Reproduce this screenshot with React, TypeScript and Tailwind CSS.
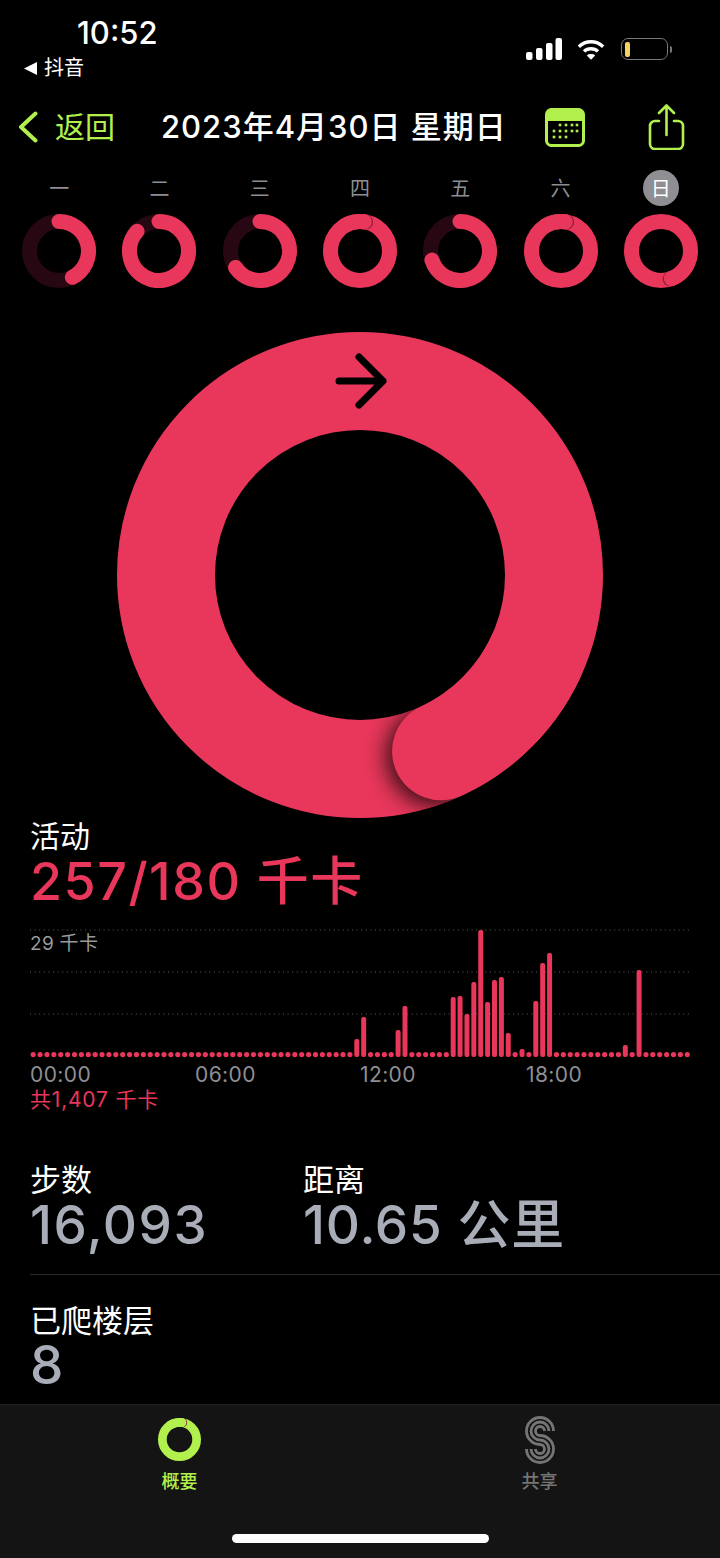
import { useId } from 'react';

const RED = '#e8375a';
const LIME = '#b2f04e';

const polar = (cx: number, cy: number, r: number, deg: number) => {
  const a = ((deg - 90) * Math.PI) / 180;
  return [cx + r * Math.cos(a), cy + r * Math.sin(a)];
};

const arcPath = (cx: number, cy: number, r: number, from: number, to: number) => {
  const [x1, y1] = polar(cx, cy, r, from);
  const [x2, y2] = polar(cx, cy, r, to);
  const large = to - from > 180 ? 1 : 0;
  return `M${x1} ${y1}A${r} ${r} 0 ${large} 1 ${x2} ${y2}`;
};

function MiniRing({ end, color = RED, track = '#270812', size = 74 }: { end: number; color?: string; track?: string; size?: number }) {
  const c = size / 2;
  const sw = size * 0.203;
  const r = c - sw / 2;
  const over = end > 360;
  const tail = end % 360;
  const [capX, capY] = polar(c, c, r, tail);
  const [edgeX, edgeY] = polar(c, c, r, tail + 3);
  return (
    <svg width={size} height={size} viewBox={`0 0 ${size} ${size}`}>
      <circle cx={c} cy={c} r={r} fill="none" stroke={over ? color : track} strokeWidth={sw} />
      {over ? (
        <>
          <circle cx={edgeX} cy={edgeY} r={sw / 2} fill="#8f2039" />
          <path d={arcPath(c, c, r, tail - 40, tail)} fill="none" stroke={color} strokeWidth={sw} strokeLinecap="round" />
          <circle cx={capX} cy={capY} r={sw / 2} fill={color} />
        </>
      ) : (
        <path d={arcPath(c, c, r, 0, end)} fill="none" stroke={color} strokeWidth={sw} strokeLinecap="round" />
      )}
    </svg>
  );
}

function BigRing() {
  const id = useId();
  return (
    <svg width="486" height="486" viewBox="0 0 486 486">
      <defs>
        <filter id={`${id}b`} x="-50%" y="-50%" width="200%" height="200%">
          <feGaussianBlur stdDeviation="11" />
        </filter>
        <clipPath id={`${id}c`}>
          <path clipRule="evenodd" d="M0 243a243 243 0 1 0 486 0a243 243 0 1 0-486 0ZM98 243a145 145 0 1 1 290 0a145 145 0 1 1-290 0Z" />
        </clipPath>
      </defs>
      <circle cx="243" cy="243" r="194" fill="none" stroke={RED} strokeWidth="98" />
      <g clipPath={`url(#${id}c)`}>
        <circle cx="320" cy="424" r="50" fill="#000" opacity="0.8" filter={`url(#${id}b)`} />
      </g>
      <path d={arcPath(243, 243, 194, 115, 155.3)} fill="none" stroke={RED} strokeWidth="98" strokeLinecap="round" />
      <path d="M222 49H265M242 25L266 49L242 73" fill="none" stroke="#000" strokeWidth="7" strokeLinecap="round" strokeLinejoin="round" />
    </svg>
  );
}

const tall: Record<number, number> = {
  47: 18, 48: 40, 53: 27, 54: 51, 61: 60, 62: 61, 63: 43, 64: 75, 65: 127, 66: 55, 67: 77, 68: 80, 69: 24,
  71: 8, 73: 56, 74: 94, 75: 104, 86: 12, 88: 87,
};

function Chart() {
  const base = 131;
  return (
    <svg width="720" height="134" viewBox="0 0 720 134" className="block">
      {[4, 46, 88].map((y) => (
        <line key={y} x1="30" x2="690" y1={y} y2={y} stroke="#5f5f5f" strokeWidth="1" strokeDasharray="1 3.6" />
      ))}
      {Array.from({ length: 96 }, (_, i) => {
        const x = 33.2 + i * 6.885;
        const h = tall[i];
        return h ? (
          <rect key={i} x={x - 2.5} y={base - h} width="5" height={h} rx="2" fill={RED} />
        ) : (
          <circle key={i} cx={x} cy={base - 2.4} r="2.6" fill={RED} />
        );
      })}
    </svg>
  );
}

function ShareTabIcon() {
  const tracks = [4.5, 9, 13.5];
  return (
    <svg width="32" height="48" viewBox="-16 -24 32 48" fill="none" stroke="#757575" strokeWidth="2.8">
      {tracks.map((r) => {
        const b = 18 - r;
        return (
          <path
            key={r}
            d={`M${r} -9A${r} ${r} 0 1 0 0 ${r - 9}A${b} ${b} 0 1 1 ${-b} 9`}
          />
        );
      })}
    </svg>
  );
}

const days = [
  { label: '一', end: 153 },
  { label: '二', end: 312 },
  { label: '三', end: 236 },
  { label: '四', end: 368 },
  { label: '五', end: 252 },
  { label: '六', end: 368 },
  { label: '日', end: 519 },
];

export default function App() {
  return (
    <div className="flex h-[1558px] w-[720px] flex-col overflow-hidden bg-black font-['Inter','Noto_Sans_CJK_SC',sans-serif] text-white">
      {/* status bar */}
      <div className="flex h-[104px] shrink-0 justify-between">
        <div>
          <div className="pl-[77px] pt-[15px] text-[31px] font-medium leading-[36px]">10:52</div>
          <div className="mt-[5px] flex h-[24px] items-center gap-[7px] pl-[24px] text-[20px] leading-[24px]">
            <svg width="13" height="13" viewBox="0 0 13 13"><path d="M0 6.5L13 0V13Z" fill="#fff" /></svg>
            抖音
          </div>
        </div>
        <div className="mr-[48px] mt-[37px] flex h-[24px] items-center gap-[15px]">
          <svg width="36" height="22" viewBox="0 0 36 22" fill="#fff">
            <rect x="0" y="14" width="6.5" height="8" rx="2" />
            <rect x="10" y="10" width="6.5" height="12" rx="2" />
            <rect x="20" y="5" width="6.5" height="17" rx="2" />
            <rect x="29.5" y="0" width="6.5" height="22" rx="2" />
          </svg>
          <svg width="28" height="23" viewBox="0 0 30 23" fill="none" stroke="#fff" strokeWidth="3.6" strokeLinecap="butt">
            <path d="M2 8.5C9.5 1.5 20.5 1.5 28 8.5" />
            <path d="M7.5 13.5C11.5 9.8 18.5 9.8 22.5 13.5" />
            <path d="M15 22.5L10.5 17.8C13 15.8 17 15.8 19.5 17.8Z" fill="#fff" stroke="none" />
          </svg>
          <div className="ml-[1px] flex items-center gap-[2px]">
            <div className="flex h-[22px] w-[47px] items-center rounded-[7px] border border-[#77777c] px-[3px]">
              <div className="h-[15px] w-[5px] rounded-[2px] bg-[#f4d35e]" />
            </div>
            <div className="h-[7px] w-[2px] rounded-r-full bg-[#77777c]" />
          </div>
        </div>
      </div>

      {/* nav */}
      <div className="flex h-[46px] shrink-0 items-center pl-[18px]">
        <svg width="20" height="32" viewBox="0 0 20 32" fill="none" stroke={LIME} strokeWidth="4" strokeLinecap="round" strokeLinejoin="round">
          <path d="M17.5 2.5L3 16L17.5 29.5" />
        </svg>
        <span className="ml-[17px] w-[106px] text-[30px] leading-[36px] text-[#b2f04e]">返回</span>
        <span className="w-[384px] whitespace-nowrap text-[31px] font-medium leading-[38px] tracking-[1px]">2023年4月30日 星期日</span>
        <svg width="40" height="39" viewBox="0 0 40 39">
          <rect x="1.5" y="1.5" width="37" height="36" rx="5" fill="none" stroke={LIME} strokeWidth="3" />
          <path d="M1.5 13V6.5a5 5 0 0 1 5-5h27a5 5 0 0 1 5 5V13Z" fill={LIME} />
          <g fill={LIME}>
            {[[15, 17], [21, 17], [27, 17], [32, 17], [9, 23], [15, 23], [21, 23], [27, 23], [32, 23], [9, 29], [15, 29], [21, 29]].map(([x, y]) => (
              <rect key={`${x}-${y}`} x={x - 1.3} y={y - 1.3} width="2.6" height="2.6" />
            ))}
          </g>
        </svg>
        <svg width="37" height="46" viewBox="0 0 37 46" fill="none" stroke={LIME} strokeWidth="2.6" strokeLinecap="round" strokeLinejoin="round" className="ml-[63px]">
          <path d="M11 17H7a5 5 0 0 0-5 5v18a5 5 0 0 0 5 5h23a5 5 0 0 0 5-5V22a5 5 0 0 0-5-5h-4" />
          <path d="M18.5 31V2M11 9l7.5-7.5L26 9" />
        </svg>
      </div>

      {/* week */}
      <div className="mt-[20px] grid shrink-0 grid-cols-7 px-[9px]">
        {days.map((d, i) => (
          <div key={d.label} className="flex h-[36px] items-center justify-center">
            <span className={`flex h-[36px] w-[36px] items-center justify-center rounded-full pt-px text-[20px] ${i === 6 ? 'bg-[#8e8e93] text-white' : 'text-[#8e8e93]'}`}>
              {d.label}
            </span>
          </div>
        ))}
      </div>
      <div className="mt-[8px] grid shrink-0 grid-cols-7 px-[9px]">
        {days.map((d) => (
          <div key={d.label} className="flex justify-center">
            <MiniRing end={d.end} />
          </div>
        ))}
      </div>

      {/* main ring */}
      <div className="mt-[44px] flex shrink-0 justify-center">
        <BigRing />
      </div>

      {/* activity */}
      <div className="shrink-0 pl-[30px] text-[30px] leading-[36px]">活动</div>
      <div className="shrink-0 whitespace-nowrap pl-[30px] text-[52px] font-medium leading-[56px] tracking-[1.5px] text-[#e8375a]">257/180 千卡</div>
      <div className="relative mt-[16px] shrink-0">
        <Chart />
        <span className="absolute left-[30px] top-[6px] text-[19px] leading-[24px] tracking-[0.3px] text-[#9a9a9a]">29 千卡</span>
      </div>
      <div className="mt-[3px] grid h-[24px] shrink-0 grid-cols-[165px_165px_166px_1fr] pl-[30px] text-[21px] leading-[24px] tracking-[0.4px] text-[#8e8e93]">
        <span>00:00</span>
        <span>06:00</span>
        <span>12:00</span>
        <span>18:00</span>
      </div>
      <div className="h-[26px] shrink-0 pl-[30px] text-[21px] leading-[26px] tracking-[0.8px] text-[#e8375a]">共1,407 千卡</div>

      {/* metrics */}
      <div className="mt-[49px] flex shrink-0 pl-[30px]">
        <div className="w-[273px]">
          <div className="text-[31px] leading-[36px]">步数</div>
          <div className="text-[53px] font-medium leading-[54px] tracking-[1.5px] text-[#a9adb8]">16,093</div>
        </div>
        <div>
          <div className="text-[31px] leading-[36px]">距离</div>
          <div className="whitespace-nowrap text-[53px] font-medium leading-[54px] tracking-[0.8px] text-[#a9adb8]">10.65 公里</div>
        </div>
      </div>
      <div className="ml-[30px] mt-[22px] h-px shrink-0 bg-[#2a2a2c]" />
      <div className="mt-[28px] shrink-0 pl-[30px]">
        <div className="text-[31px] leading-[36px]">已爬楼层</div>
        <div className="text-[53px] font-medium leading-[52px] text-[#a9adb8]">8</div>
      </div>

      {/* tab bar */}
      <div className="mt-auto flex h-[154px] shrink-0 flex-col border-t border-[#222] bg-[#141414]">
        <div className="flex h-[129px] shrink-0">
          <div className="flex w-[359px] flex-col items-center pt-[13px]">
            <MiniRing end={368} color={LIME} size={43} />
            <span className="mt-[10px] text-[18px] font-medium leading-[22px] text-[#b2f04e]">概要</span>
          </div>
          <div className="flex flex-1 flex-col items-center pt-[11px]">
            <ShareTabIcon />
            <span className="mt-[7px] text-[18px] font-medium leading-[22px] text-[#757575]">共享</span>
          </div>
        </div>
        <div className="mx-auto h-[9px] w-[257px] rounded-full bg-white" />
      </div>
    </div>
  );
}
